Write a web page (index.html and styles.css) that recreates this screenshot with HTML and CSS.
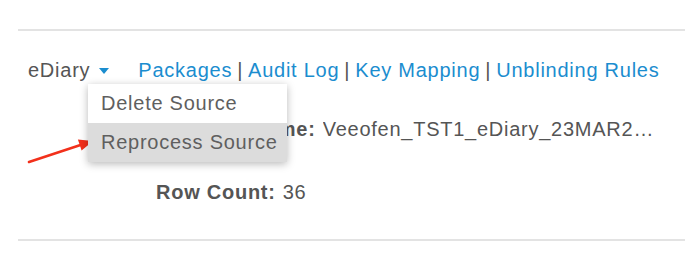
FILE: index.html
```html
<!DOCTYPE html>
<html>
<head>
<meta charset="utf-8">
<link rel="stylesheet" href="styles.css">
</head>
<body>
<div class="page">
  <div class="rule"></div>
  <div class="nav">
    <div class="dropdown">
      <span class="source">eDiary</span>
      <span class="caret"></span>
      <div class="menu">
        <div class="menu-item">Delete Source</div>
        <div class="menu-item active">Reprocess Source</div>
      </div>
    </div>
    <div class="links">
      <a class="link">Packages</a><span class="sep">|</span><a class="link">Audit Log</a><span class="sep">|</span><a class="link">Key Mapping</a><span class="sep">|</span><a class="link">Unblinding Rules</a>
    </div>
  </div>
  <div class="details">
    <div class="row row-name"><span class="label">File Name:</span><span class="value trunc">Veeofen_TST1_eDiary_23MAR2023_120000.csv</span></div>
    <div class="row row-count"><span class="label">Row Count:</span><span class="value">36</span></div>
  </div>
  <div class="rule"></div>
  <svg class="arrow" width="110" height="180" viewBox="0 0 110 180">
    <line x1="29" y1="162" x2="82" y2="144.5" stroke="#f2301b" stroke-width="2.6" stroke-linecap="round"/>
    <polygon points="93,141 81.6,150.6 77.9,139.6" fill="#f2301b"/>
  </svg>
</div>
</body>
</html>
```
FILE: styles.css
```css
html, body {
  margin: 0;
  padding: 0;
  background: #ffffff;
}
body {
  font-family: "Liberation Sans", Arial, sans-serif;
  font-size: 20px;
  line-height: 24px;
  letter-spacing: 0.75px;
  color: #555555;
}
.page {
  position: relative;
  width: 685px;
  height: 264px;
  padding: 29px 0 0 18px;
  box-sizing: border-box;
  overflow: hidden;
}
.rule {
  height: 2px;
  background: #e3e3e3;
}
.nav {
  display: flex;
  align-items: center;
  margin-top: 27px;
  padding-left: 10px;
}
.dropdown {
  position: relative;
  display: flex;
  align-items: center;
}
.caret {
  width: 0;
  height: 0;
  margin-left: 9px;
  margin-top: 2px;
  border-left: 5.5px solid transparent;
  border-right: 5.5px solid transparent;
  border-top: 6px solid #1b8dcf;
}
.links {
  margin-left: 29px;
  display: flex;
}
.link {
  color: #1b8dcf;
}
.sep {
  color: #555555;
  margin: 0 5px;
}
.menu {
  position: absolute;
  left: 60px;
  top: 26px;
  width: 199px;
  background: #ffffff;
  box-shadow: 0 2px 8px rgba(0, 0, 0, 0.28);
  z-index: 2;
}
.menu-item {
  height: 39px;
  line-height: 39px;
  padding-left: 13px;
  color: #5f5f5f;
  white-space: nowrap;
}
.menu-item.active {
  background: #dcdcdc;
}
.details {
  display: flex;
  flex-direction: column;
  gap: 39px;
  margin-top: 35px;
  margin-bottom: 35px;
}
.row {
  display: flex;
  white-space: nowrap;
}
.row-name {
  padding-left: 189px;
}
.row-count {
  padding-left: 138px;
}
.label {
  font-weight: bold;
  margin-right: 7px;
}
.trunc {
  max-width: 334px;
  overflow: hidden;
  text-overflow: ellipsis;
}
.arrow {
  position: absolute;
  left: 0;
  top: 0;
}
```
